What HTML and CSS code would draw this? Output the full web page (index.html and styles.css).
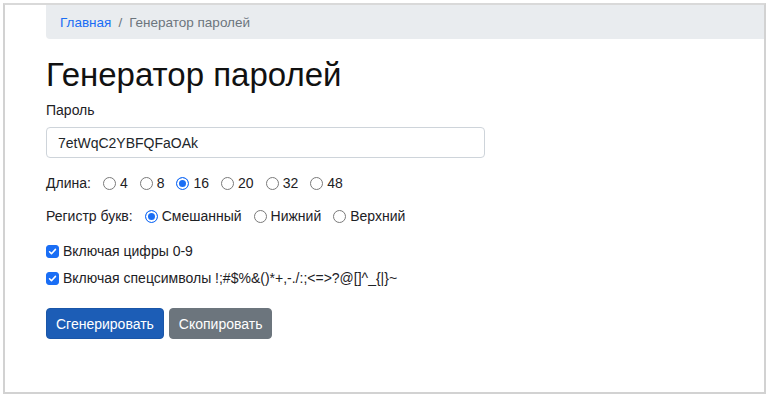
FILE: index.html
```
<!DOCTYPE html>
<html lang="ru">
<head>
<meta charset="utf-8">
<title>Генератор паролей</title>
<link rel="stylesheet" href="styles.css">
</head>
<body>
<div class="frame">
  <nav class="breadcrumb">
    <a href="#" class="crumb-link">Главная</a>
    <span class="crumb-sep">/</span>
    <span class="crumb-active">Генератор паролей</span>
  </nav>
  <h1 class="title">Генератор паролей</h1>
  <label class="field-label" for="pwd">Пароль</label>
  <input class="pwd-input" id="pwd" type="text" value="7etWqC2YBFQFaOAk">
  <div class="option-row row-length">
    <span class="row-label">Длина:</span>
    <label class="opt"><input type="radio" name="len" class="radio"> 4</label>
    <label class="opt"><input type="radio" name="len" class="radio"> 8</label>
    <label class="opt"><input type="radio" name="len" class="radio" checked> 16</label>
    <label class="opt"><input type="radio" name="len" class="radio"> 20</label>
    <label class="opt"><input type="radio" name="len" class="radio"> 32</label>
    <label class="opt"><input type="radio" name="len" class="radio"> 48</label>
  </div>
  <div class="option-row row-case">
    <span class="row-label">Регистр букв:</span>
    <label class="opt"><input type="radio" name="case" class="radio" checked> Смешанный</label>
    <label class="opt"><input type="radio" name="case" class="radio"> Нижний</label>
    <label class="opt"><input type="radio" name="case" class="radio"> Верхний</label>
  </div>
  <label class="check-row row-digits"><input type="checkbox" class="check" checked> Включая цифры 0-9</label>
  <label class="check-row row-special"><input type="checkbox" class="check" checked> Включая спецсимволы !;#$%&amp;()*+,-./:;&lt;=&gt;?@[]^_{|}~</label>
  <div class="buttons">
    <button class="btn btn-primary" type="button">Сгенерировать</button>
    <button class="btn btn-secondary" type="button">Скопировать</button>
  </div>
</div>
</body>
</html>
```
FILE: styles.css
```
* { box-sizing: border-box; }
html, body { margin: 0; padding: 0; background: #fff; }
body {
  font-family: "Liberation Sans", Arial, sans-serif;
  font-size: 14px;
  color: #1d2125;
}
.frame {
  margin: 3px 4px 0 3px;
  height: 391px;
  border: 2px solid #d2d2d2;
  border-top-color: #d9d9d9;
  padding-left: 41px;
  display: flex;
  flex-direction: column;
  align-items: flex-start;
  overflow: hidden;
}
.breadcrumb {
  align-self: stretch;
  height: 34px;
  background: #e9ecef;
  border-bottom-left-radius: 4px;
  display: flex;
  align-items: center;
  padding: 0 14px;
  font-size: 13.5px;
}
.crumb-link { color: #1a6ef5; text-decoration: none; }
.crumb-sep { color: #6c757d; margin: 0 7px; }
.crumb-active { color: #6c757d; }
.title {
  margin: 16px 0 0 0;
  font-size: 33px;
  font-weight: 400;
  line-height: 40px;
  color: #111;
}
.field-label { display: block; line-height: 20px; margin-top: 5px; }
.pwd-input {
  margin-top: 7px;
  width: 439px;
  height: 31px;
  border: 1px solid #ced4da;
  border-radius: 4px;
  padding: 0 11px;
  font: inherit;
  font-size: 14px;
  color: #212529;
  outline: none;
}
.option-row {
  display: flex;
  align-items: center;
  line-height: 20px;
  gap: 12px;
}
.row-length { margin-top: 15px; }
.row-case { margin-top: 13px; }
.opt { display: flex; align-items: center; gap: 4px; }
.radio {
  appearance: none;
  -webkit-appearance: none;
  margin: 0;
  width: 13px;
  height: 13px;
  border-radius: 50%;
  border: 1px solid #7a7a7a;
  background: #fff;
}
.radio:checked {
  border-color: #1a6ef5;
  background: #1a6ef5;
  box-shadow: inset 0 0 0 2px #fff;
  border-width: 1.5px;
}
.check-row {
  display: flex;
  align-items: center;
  gap: 4px;
  line-height: 20px;
}
.row-digits { margin-top: 15px; }
.row-special { margin-top: 7px; }
.check {
  appearance: none;
  -webkit-appearance: none;
  margin: 0;
  width: 13px;
  height: 13px;
  border-radius: 3px;
  border: 1px solid #7a7a7a;
  background: #fff;
}
.check:checked {
  border-color: #1a6ef5;
  background: #1a6ef5 url("data:image/svg+xml,%3Csvg xmlns='http://www.w3.org/2000/svg' viewBox='0 0 13 13'%3E%3Cpath d='M3 6.8l2.3 2.3L10 4' fill='none' stroke='%23fff' stroke-width='1.8' stroke-linecap='round' stroke-linejoin='round'/%3E%3C/svg%3E") center/100% 100% no-repeat;
}
.buttons {
  margin-top: 20px;
  display: flex;
  gap: 5px;
}
.btn {
  height: 31px;
  padding: 0 9px;
  border-radius: 4px;
  font: inherit;
  font-size: 14px;
  color: #fff;
  border: 1px solid transparent;
}
.btn-primary { background: #1c5db6; border-color: #1a56a8; }
.btn-secondary { background: #6c757d; border-color: #6c757d; }
```
